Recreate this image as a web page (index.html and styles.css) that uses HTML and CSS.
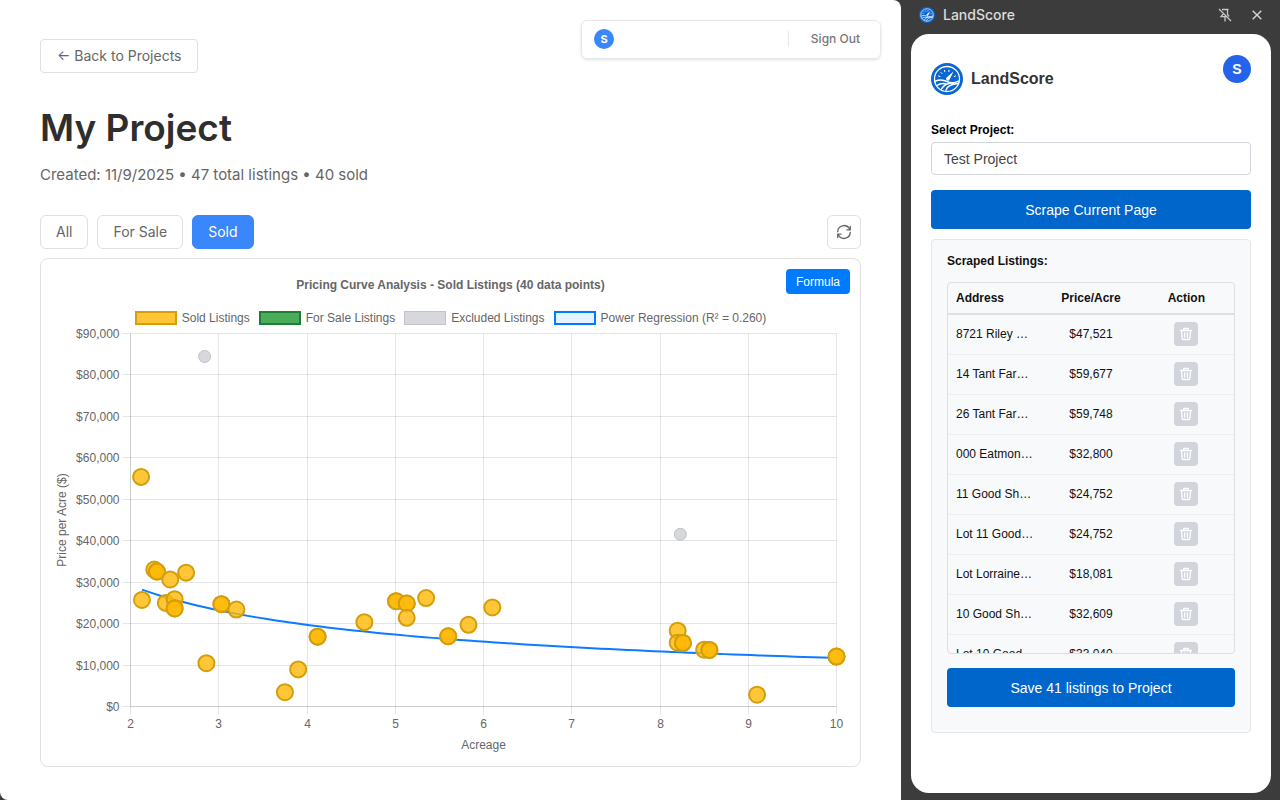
FILE: index.html
```
<!DOCTYPE html>
<html lang="en">
<head>
<meta charset="utf-8">
<meta name="viewport" content="width=device-width, initial-scale=1">
<title>LandScore</title>
<link rel="stylesheet" href="styles.css">
</head>
<body>
<svg class="defs" aria-hidden="true">
  <symbol id="logo" viewBox="0 0 32 32">
    <circle cx="16" cy="16" r="16" fill="#0c66d0"/>
    <circle cx="16" cy="16" r="12.500" fill="none" stroke="#fff" stroke-width="1.300"/>
    <g fill="none" stroke="#fff" stroke-linecap="round">
      <path d="M4.500 18.200c4-2 8-1.500 11.500.3 4 2 8 1.500 11.500-.3" stroke-width="1.500"/>
      <path d="M6 22.500c4-2.800 7-2.200 9-1.500M15 27c1-3.500 5.500-6 12-6.500M10.500 26c2-3.500 6-6 12-6.200" stroke-width="1.400"/>
      <path d="M7.500 13l1.500.6M10 9.500l1 1M13.500 7.300l.4 1.400M18 7.200l-.2 1.400M24.500 13l-1.200.5" stroke-width="1"/>
    </g>
    <path d="M22.500 8.500l-4.200 8.600a2 2 0 0 1-3.200-2.200z" fill="#fff"/>
  </symbol>
  <symbol id="trash" viewBox="0 0 14 14">
    <path d="M1.500 3.500h11M4.800 3.300V1.500h4.400v1.800M2.500 3.500l.6 8q.1 1 1.100 1h5.600q1 0 1.100-1l.6-8M5.600 6v4.200M8.400 6v4.200" fill="none" stroke="#fff" stroke-width="1.300" stroke-linecap="round" stroke-linejoin="round"/>
  </symbol>
</svg>

<main class="page">
  <header class="page-top">
    <button class="btn back" type="button">← Back to Projects</button>
    <div class="user-bar">
      <span class="avatar avatar-small">S</span>
      <button class="sign-out" type="button">Sign Out</button>
    </div>
  </header>

  <div class="content">
    <h1 class="title">My Project</h1>
    <p class="meta">Created: 11/9/2025 • 47 total listings • 40 sold</p>

    <div class="toolbar">
      <button class="btn filter" type="button">All</button>
      <button class="btn filter" type="button">For Sale</button>
      <button class="btn filter active" type="button">Sold</button>
      <button class="btn refresh" type="button" aria-label="Refresh">
        <svg width="16" height="16" viewBox="0 0 16 16" fill="none" stroke="#666" stroke-width="1.300" stroke-linecap="round" stroke-linejoin="round">
          <path d="M1.700 7.600A6.300 6.300 0 0 1 13.300 4.500l1 1.300M14.300 2.500v3.400h-3.400M14.300 8.400A6.300 6.300 0 0 1 2.700 11.500l-1-1.300M1.700 13.500v-3.400h3.400"/>
        </svg>
      </button>
    </div>

    <section class="chart-card">
      <button class="formula" type="button">Formula</button>
      <h2 class="chart-title">Pricing Curve Analysis - Sold Listings (40 data points)</h2>
      <ul class="legend">
        <li><span class="swatch sold"></span>Sold Listings</li>
        <li><span class="swatch for-sale"></span>For Sale Listings</li>
        <li><span class="swatch excluded"></span>Excluded Listings</li>
        <li><span class="swatch regression"></span>Power Regression (R² = 0.260)</li>
      </ul>
      <svg class="plot" id="plot" role="img" aria-label="Price per acre against acreage"></svg>
    </section>
  </div>
</main>

<aside class="side">
  <header class="side-bar">
    <svg class="side-icon" viewBox="0 0 32 32"><use href="#logo"/></svg>
    <span class="side-name">LandScore</span>
    <button class="icon-btn" type="button" aria-label="Unpin">
      <svg width="14" height="14" viewBox="0 0 14 14" fill="none" stroke="#c7c7c7" stroke-width="1.300">
        <path d="M1 1l12 12M4 1.500h6.500M9.500 1.500v5l1.500 2M4.700 4.500v2L3 8.700h5M7 8.700V13.500"/>
      </svg>
    </button>
    <button class="icon-btn" type="button" aria-label="Close">
      <svg width="10" height="10" viewBox="0 0 10 10" fill="none" stroke="#d6d6d6" stroke-width="1.400"><path d="M.7.7l8.600 8.600M9.300.7L.7 9.300"/></svg>
    </button>
  </header>

  <div class="panel">
    <div class="brand">
      <svg class="brand-icon" viewBox="0 0 32 32"><use href="#logo"/></svg>
      <span class="brand-name">LandScore</span>
      <span class="avatar avatar-large">S</span>
    </div>

    <label class="field-label" for="project">Select Project:</label>
    <select class="field" id="project"><option>Test Project</option></select>
    <button class="primary" type="button">Scrape Current Page</button>

    <section class="results">
      <h2 class="results-title">Scraped Listings:</h2>
      <div class="table-wrap">
        <table class="listings">
          <thead><tr><th>Address</th><th>Price/Acre</th><th>Action</th></tr></thead>
          <tbody id="rows"></tbody>
        </table>
      </div>
      <button class="primary" type="button">Save 41 listings to Project</button>
    </section>
  </div>
</aside>
<script src="app.js"></script>
</body>
</html>
```

FILE: styles.css
```
* { box-sizing: border-box; }

body {
  margin: 0;
  min-height: 100vh;
  display: flex;
  background: #3c3c3c;
  font-family: Inter, "Liberation Sans", sans-serif;
  color: #666;
}

button, select { font: inherit; cursor: pointer; }
h1, h2, p, ul { margin: 0; padding: 0; }
.defs { position: absolute; width: 0; height: 0; }

.page {
  flex: 1;
  min-width: 0;
  background: #fff;
  border-radius: 0 8px 0 8px;
  display: flex;
  flex-direction: column;
}

.page-top {
  display: flex;
  justify-content: space-between;
  align-items: flex-start;
  padding: 20px 20px 0 40px;
}

.btn {
  height: 34px;
  padding: 0 16px 2px;
  border: 1px solid #e0e0e0;
  border-radius: 6px;
  background: #fff;
  color: #666;
  font-size: 14px;
  white-space: nowrap;
}

.btn.back { margin-top: 19px; border-radius: 4px; }
.btn.filter { padding: 0 15px 2px; }
.btn.active { background: #3a86fb; border-color: #3a86fb; color: #fff; }

.user-bar {
  width: 300px;
  height: 39px;
  padding: 0 20px 2px 12px;
  display: flex;
  align-items: center;
  justify-content: space-between;
  border: 1px solid #e8e8e8;
  border-radius: 6px;
  box-shadow: 0 1px 3px rgba(0, 0, 0, 0.12);
}

.avatar {
  display: flex;
  align-items: center;
  justify-content: center;
  border-radius: 50%;
  color: #fff;
  font-weight: 700;
}
.avatar-small { width: 20px; height: 20px; background: #3a86fb; font-size: 11px; }
.avatar-large {
  width: 28px;
  height: 28px;
  margin: 0 0 20px auto;
  background: #2563eb;
  font-size: 14px;
}

.sign-out {
  height: 16px;
  padding: 0 0 0 22px;
  border: 0;
  border-left: 1px solid #e8e8e8;
  background: none;
  color: #777;
  font-size: 12px;
  font-weight: 500;
  line-height: 16px;
}

.content {
  flex: 1;
  display: flex;
  flex-direction: column;
  padding: 31px 40px 33px;
}

.title {
  color: #2e2e2e;
  font-size: 37px;
  font-weight: 600;
  line-height: 48px;
}
.meta { margin-top: 11px; font-size: 15px; line-height: 24px; }
.toolbar { display: flex; gap: 9px; margin: 28px 0 9px; }
.refresh {
  width: 34px;
  margin-left: auto;
  padding: 0;
  display: flex;
  align-items: center;
  justify-content: center;
}

.chart-card {
  position: relative;
  flex: 1;
  display: flex;
  flex-direction: column;
  border: 1px solid #e0e0e0;
  border-radius: 8px;
  padding: 18px 0 6px;
  font-family: "Liberation Sans", Arial, sans-serif;
  font-size: 12px;
}
.formula {
  position: absolute;
  top: 10px;
  right: 10px;
  height: 25px;
  padding: 0 10px;
  border: 0;
  border-radius: 4px;
  background: #007bff;
  color: #fff;
}
.chart-title { font-size: 12px; line-height: 16px; text-align: center; }
.legend {
  display: flex;
  justify-content: center;
  gap: 9px;
  margin-top: 17px;
  list-style: none;
  line-height: 16px;
}
.legend li { display: flex; align-items: center; gap: 5px; white-space: nowrap; }
.swatch { width: 42px; height: 14px; border: 2px solid; }
.sold { background: #ffc537; border-color: #d69e0a; }
.for-sale { background: #4bac5c; border-color: #1e7e34; }
.excluded { background: #d6d8db; border: 1px solid #c2c4c7; }
.regression { background: #e6f2ff; border-color: #007bff; }

.plot { display: block; width: 100%; height: 434px; flex: 1; }
.grid { stroke: #000; stroke-opacity: 0.1; }
.axis { stroke: #000; stroke-opacity: 0.1; }
.tick { fill: #666; font-size: 12px; }
.end { text-anchor: end; }
.middle { text-anchor: middle; }
.curve { fill: none; stroke: #0d7bff; stroke-width: 2; }
.dot { fill: rgba(255, 185, 5, 0.8); stroke: #d39e0a; stroke-width: 2; }
.dot-excluded { fill: #d6d8db; stroke: #bfc1c4; }

.side {
  width: 379px;
  display: flex;
  flex-direction: column;
  padding: 0 9px 7px 10px;
}
.side-bar {
  height: 34px;
  display: flex;
  align-items: center;
  padding: 0 5px 5px 8px;
  color: #dcdcdc;
}
.side-icon { width: 16px; height: 16px; }
.side-name { flex: 1; margin-left: 8px; font-size: 14px; font-weight: 500; line-height: 16px; }
.icon-btn {
  width: 18px;
  height: 18px;
  margin-left: 14px;
  padding: 0;
  display: flex;
  align-items: center;
  justify-content: center;
  border: 0;
  background: none;
}

.panel {
  flex: 1;
  padding: 20px;
  border-radius: 18px;
  background: #fff;
  color: #111;
  font-family: "Liberation Sans", Arial, sans-serif;
  font-size: 12px;
}
.brand { display: flex; align-items: center; height: 50px; margin-bottom: 18px; }
.brand-icon { width: 32px; height: 32px; }
.brand-name { margin-left: 8px; color: #333; font-size: 16px; font-weight: 700; }

.field-label { display: block; color: #000; font-weight: 700; line-height: 16px; }
.field {
  appearance: none;
  display: block;
  width: 100%;
  height: 33px;
  margin: 4px 0 15px;
  padding: 0 12px;
  border: 1px solid #d1d5db;
  border-radius: 4px;
  background: #fff;
  color: #444;
  font-size: 14px;
}
.primary {
  display: block;
  width: 100%;
  height: 39px;
  border: 0;
  border-radius: 4px;
  background: #0066cc;
  color: #fff;
  font-size: 14px;
}

.results {
  margin-top: 10px;
  padding: 13px 15px 25px;
  border: 1px solid #e5e7eb;
  border-radius: 4px;
  background: #f8f9fb;
}
.results-title { font-size: 12px; line-height: 16px; }
.table-wrap {
  height: 372px;
  margin: 13px 0 14px;
  overflow: hidden;
  border: 1px solid #dddfe2;
  border-radius: 4px;
}
.listings { width: 100%; table-layout: fixed; border-collapse: collapse; }
.listings th {
  height: 31px;
  padding: 0 8px;
  border-bottom: 2px solid #dddfe2;
}
.listings td {
  height: 40px;
  padding: 0 8px;
  border-bottom: 1px solid #eceef0;
  text-align: center;
  white-space: nowrap;
}
.listings th:first-child, .listings td:first-child { text-align: left; }
.delete {
  width: 24px;
  height: 24px;
  padding: 0;
  display: flex;
  align-items: center;
  justify-content: center;
  margin: 0 auto;
  border: 0;
  border-radius: 4px;
  background: #d1d5db;
}
```

FILE: app.js
```
const listings = [
  ["8721 Riley …", "$47,521"],
  ["14 Tant Far…", "$59,677"],
  ["26 Tant Far…", "$59,748"],
  ["000 Eatmon…", "$32,800"],
  ["11 Good Sh…", "$24,752"],
  ["Lot 11 Good…", "$24,752"],
  ["Lot Lorraine…", "$18,081"],
  ["10 Good Sh…", "$32,609"],
  ["Lot 10 Good…", "$33,040"],
];

document.getElementById("rows").innerHTML = listings.map(([address, price]) => `
  <tr><td>${address}</td><td>${price}</td>
  <td><button class="delete" type="button" aria-label="Delete"><svg width="14" height="14"><use href="#trash"/></svg></button></td></tr>`).join("");

// [acreage, price per acre, number of listings at that point]
const sold = [
  [2.12, 55400, 1], [2.13, 25700, 1], [2.27, 33050, 1], [2.3, 32550, 2],
  [2.45, 30650, 1], [2.63, 32300, 1], [2.4, 25000, 1], [2.5, 25900, 1],
  [2.5, 23650, 2], [3.03, 24700, 2], [3.2, 23400, 1], [2.86, 10450, 1],
  [3.75, 3450, 1], [3.9, 8950, 1], [4.12, 16850, 2], [4.65, 20350, 1],
  [5.01, 25400, 2], [5.13, 24850, 2], [5.13, 21400, 1], [5.35, 26150, 1],
  [5.6, 16950, 2], [5.83, 19700, 1], [6.1, 23900, 1], [8.2, 18300, 1],
  [8.2, 15400, 1], [8.26, 15350, 2], [8.5, 13700, 1], [8.56, 13650, 2],
  [9.1, 2850, 1], [10, 12050, 2],
];
const excluded = [[2.84, 84450], [8.23, 41550]];

const plot = document.getElementById("plot");

function draw() {
  const { width, height } = plot.getBoundingClientRect();
  const left = 89.5, right = width - 23.5, top = 7.5, bottom = height - 53.5;
  const x = (v) => left + (v - 2) / 8 * (right - left);
  const y = (v) => bottom - v / 90000 * (bottom - top);
  let out = "";

  for (let v = 0; v <= 90000; v += 10000) {
    const py = Math.floor(y(v)) + 0.5;
    out += `<line class="grid" x1="${left - 8}" x2="${right}" y1="${py}" y2="${py}"/>`;
    out += `<text class="tick end" x="${left - 11}" y="${py + 4}">$${v.toLocaleString("en-US")}</text>`;
  }
  for (let v = 2; v <= 10; v++) {
    const px = Math.floor(x(v)) + 0.5;
    out += `<line class="grid" x1="${px}" x2="${px}" y1="${top}" y2="${bottom + 8}"/>`;
    out += `<text class="tick middle" x="${px}" y="${bottom + 21}">${v}</text>`;
  }
  out += `<path class="axis" fill="none" d="M${left} ${top}V${bottom}H${right}"/>`;

  const midX = (left + right) / 2, midY = (top + bottom) / 2;
  out += `<text class="tick middle" x="${midX}" y="${bottom + 42}">Acreage</text>`;
  out += `<text class="tick middle" transform="translate(25 ${midY}) rotate(-90)">Price per Acre ($)</text>`;

  const curve = [];
  for (let a = 2.13; a <= 10.01; a += 0.1) {
    curve.push(`${x(a)},${y(28200 * Math.pow(a / 2.13, -0.569))}`);
  }
  out += `<polyline class="curve" points="${curve.join(" ")}"/>`;

  for (const [a, p] of excluded) out += `<circle class="dot-excluded" cx="${x(a)}" cy="${y(p)}" r="6"/>`;
  for (const [a, p, n] of sold) {
    out += `<circle class="dot" cx="${x(a)}" cy="${y(p)}" r="8"/>`.repeat(n);
  }
  plot.innerHTML = out;
}

draw();
window.addEventListener("resize", draw);
```
